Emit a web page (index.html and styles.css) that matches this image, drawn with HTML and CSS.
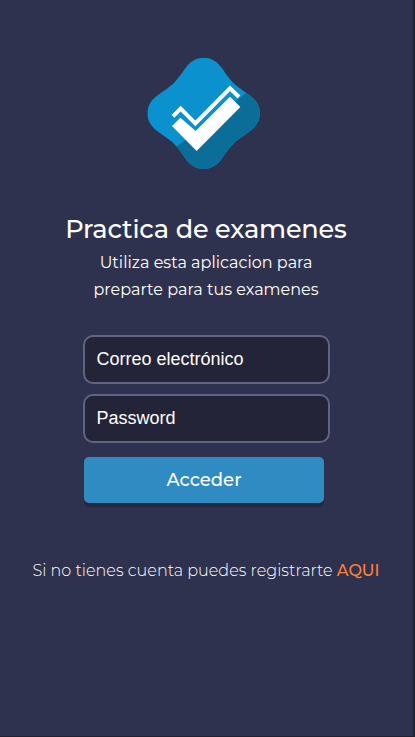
FILE: index.html
```html
<!DOCTYPE html>
<html lang="es">
<head>
<meta charset="utf-8">
<title>Practica de examenes</title>
<link rel="stylesheet" href="styles.css">
</head>
<body>
<main class="login">
  <svg class="logo" viewBox="0 0 390 375" aria-hidden="true">
    <defs>
      <clipPath id="badge"><path d="M191 23C214 23 231 34 245 53C262 77 270 90 288 106C306 121 323 130 339 144C352 156 360 172 360 190C360 208 352 224 339 236C323 250 306 259 288 274C270 290 262 303 245 327C231 346 214 357 191 357C168 357 151 346 137 327C120 303 112 290 94 274C76 259 59 250 43 236C30 224 22 208 22 190C22 172 30 156 43 144C59 130 76 121 94 106C112 90 120 77 137 53C151 34 168 23 191 23Z"/></clipPath>
    </defs>
    <g clip-path="url(#badge)">
      <path fill="#0a91ce" d="M0 0H390V375H0Z"/>
      <path fill="#0b6e99" d="M110 289L170 245L318 129L390 90V375H110Z"/>
    </g>
    <path fill="#fff" d="M96 228L121 203L167 243L270 140L301 171L170 303Z"/>
    <path fill="none" stroke="#fff" stroke-width="12" d="M99 199L122 176L166 220L270 115L297 141"/>
  </svg>
  <h1 class="title">Practica de examenes</h1>
  <p class="intro">Utiliza esta aplicacion para<br>preparte para tus examenes</p>
  <form class="form">
    <input class="field" type="email" placeholder="Correo electrónico">
    <input class="field" type="password" placeholder="Password">
    <button class="submit" type="button">Acceder</button>
  </form>
  <p class="register">Si no tienes cuenta puedes registrarte <a class="link" href="#">AQUI</a></p>
</main>
</body>
</html>
```
FILE: styles.css
```css
* { box-sizing: border-box; }
body {
  margin: 0;
  height: 737px;
  overflow: hidden;
  background: #2f324e;
  border-right: 2px solid #222326;
  border-bottom: 1px solid #222326;
  color: #fff;
  font-family: Montserrat, Inter, sans-serif;
}
.login {
  display: flex;
  flex-direction: column;
  align-items: center;
  padding-top: 50px;
}
.logo { width: 130px; height: 125px; margin-right: 3px; }
.title {
  margin: 38px 1px 0 0;
  font-size: 25.6px;
  font-weight: 500;
  line-height: 32px;
  letter-spacing: -0.18px;
  white-space: nowrap;
}
.intro {
  margin: 4px 1px 0 0;
  font-size: 16px;
  line-height: 27px;
  letter-spacing: 0.02px;
  text-align: center;
  white-space: nowrap;
}
.form {
  display: flex;
  flex-direction: column;
  width: 247px;
  margin-top: 32px;
}
.field {
  width: 247px;
  height: 49px;
  margin: 0 0 10px;
  padding: 0 11.5px;
  border: 2px solid #606480;
  border-radius: 10px;
  outline: 0;
  background: #242439;
  color: #fff;
  font-family: "Liberation Sans", Arial, sans-serif;
  font-size: 18px;
}
.field::placeholder { color: #fff; opacity: 1; }
.submit {
  width: 240px;
  height: 46px;
  margin: 4px 0 0 1px;
  padding: 0;
  border: 0;
  border-radius: 5px;
  background: #308bc2;
  box-shadow: 0 4px 0 #26273e;
  color: #fff;
  font-family: inherit;
  font-size: 18px;
  font-weight: 500;
}
.register {
  margin: 58px 1px 0 0;
  font-size: 16px;
  font-weight: 300;
  line-height: 20px;
  letter-spacing: 0.02px;
  white-space: nowrap;
}
.link { color: #ff8137; font-weight: 500; text-decoration: none; }
```
